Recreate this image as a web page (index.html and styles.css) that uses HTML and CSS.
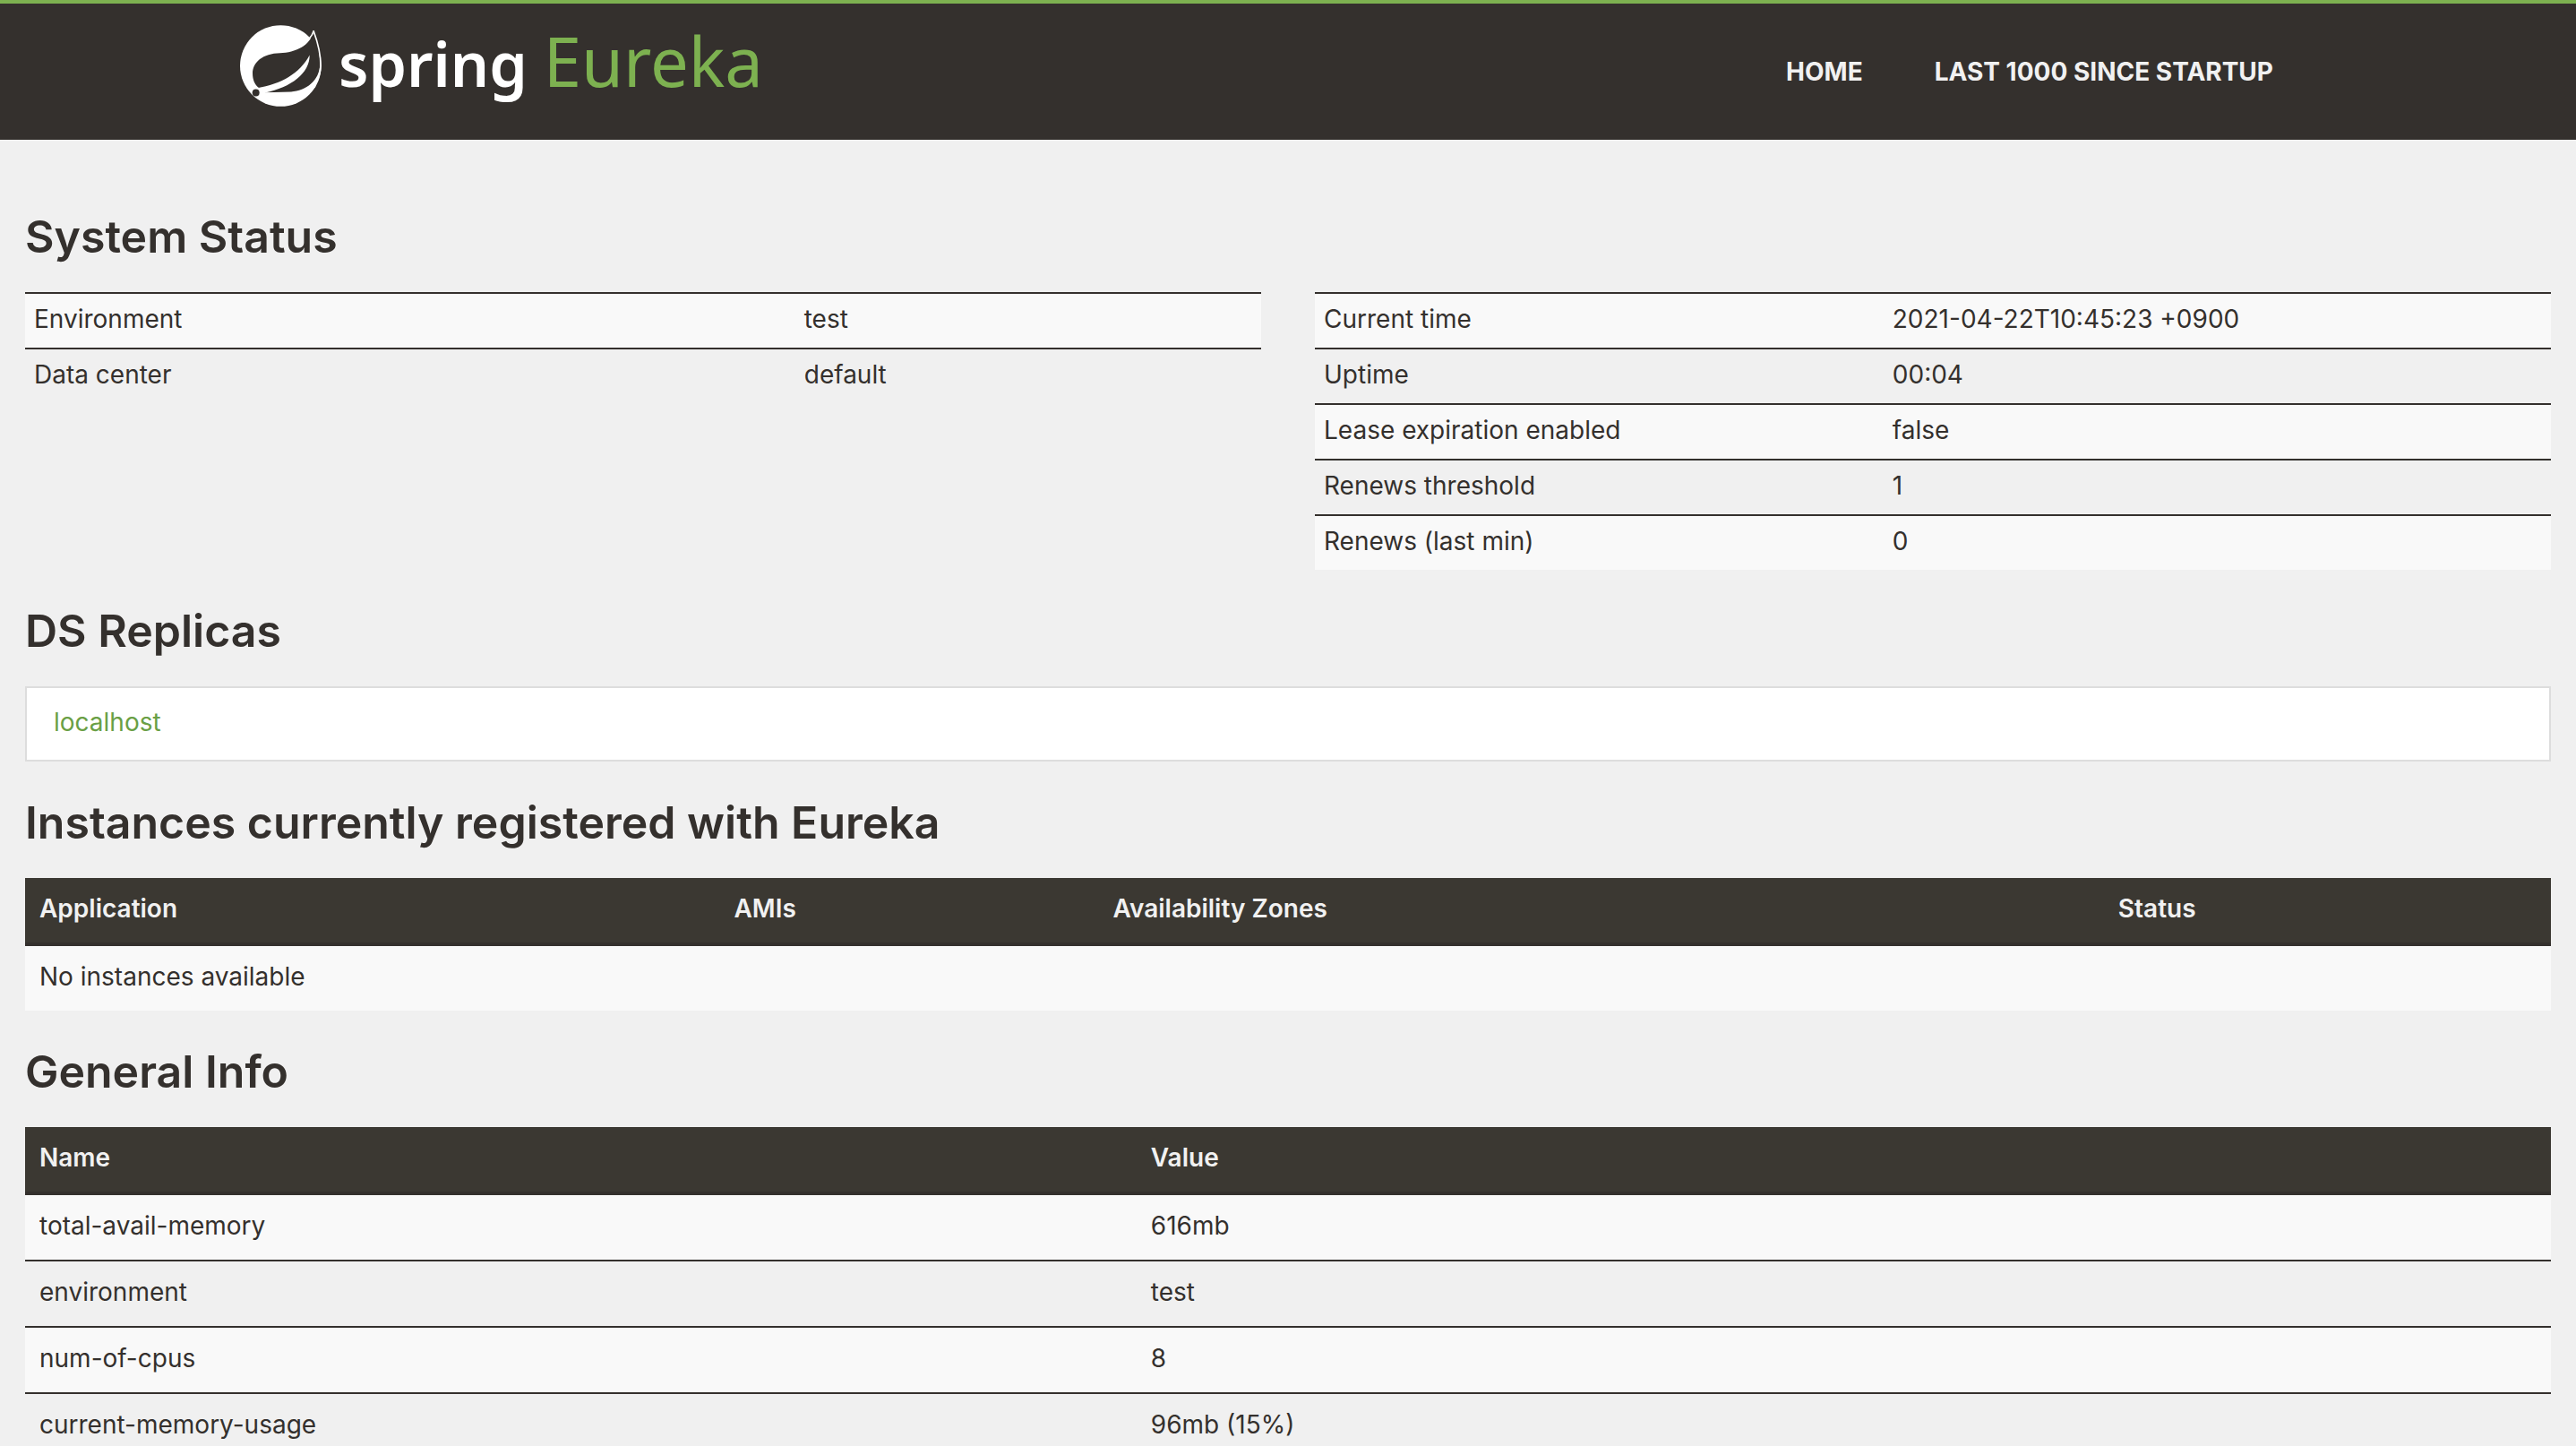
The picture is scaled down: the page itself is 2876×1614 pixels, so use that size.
FILE: index.html
```html
<!DOCTYPE html>
<html lang="en">

<head>
  <meta charset="UTF-8" />
  <meta name="viewport" content="width=device-width, initial-scale=1.0" />
  <title>Eureka</title>
  <link rel="stylesheet" href="styles.css">
</head>

<body>
  <header class="navbar">
    <div class="navbar-inner">
      <a class="brand" href="#">
        <svg class="brand-leaf" viewBox="54 54 276 272" aria-hidden="true">
          <circle cx="190" cy="190" r="136" fill="#fff" />
          <path d="M301 76C288 122 240 146 188 147C130 148 96 178 96 215C96 238 104 253 116 263L140 279L225 277C275 274 320 240 322 185C322 145 311 108 301 76Z" fill="#34302d" />
          <path d="M300 72C312 105 325 145 324 190C323 215 316 235 306 252" fill="none" stroke="#fff" stroke-width="5" />
          <path d="M301 72C298 84 292 92 284 101" fill="none" stroke="#fff" stroke-width="5" />
          <path d="M140 280C190 279 215 281 240 277C275 271 303 250 318 218L306 262L240 306L150 300Z" fill="#fff" />
          <path d="M112 264C190 252 255 215 287 154C288 214 225 262 138 280Z" fill="#fff" />
          <circle cx="107" cy="280" r="12" fill="#34302d" />
        </svg>
        <span class="brand-text">
          <span class="brand-spring">spring</span><span class="brand-eureka">Eureka</span>
        </span>
      </a>
      <nav class="nav">
        <a href="#">Home</a>
        <a href="#">Last 1000 since startup</a>
      </nav>
    </div>
  </header>

  <main class="content">
    <h1>System Status</h1>
    <div class="row">
      <table class="table table-condensed status-left">
        <tbody>
          <tr>
            <td>Environment</td>
            <td>test</td>
          </tr>
          <tr>
            <td>Data center</td>
            <td>default</td>
          </tr>
        </tbody>
      </table>
      <table class="table table-condensed status-right">
        <tbody>
          <tr>
            <td>Current time</td>
            <td>2021-04-22T10:45:23 +0900</td>
          </tr>
          <tr>
            <td>Uptime</td>
            <td>00:04</td>
          </tr>
          <tr>
            <td>Lease expiration enabled</td>
            <td>false</td>
          </tr>
          <tr>
            <td>Renews threshold</td>
            <td>1</td>
          </tr>
          <tr>
            <td>Renews (last min)</td>
            <td>0</td>
          </tr>
        </tbody>
      </table>
    </div>

    <h1>DS Replicas</h1>
    <ul class="list-group">
      <li><a href="#">localhost</a></li>
    </ul>

    <h1>Instances currently registered with Eureka</h1>
    <table class="table instances">
      <thead>
        <tr>
          <th class="col-app">Application</th>
          <th class="col-ami">AMIs</th>
          <th class="col-zone">Availability Zones</th>
          <th>Status</th>
        </tr>
      </thead>
      <tbody>
        <tr>
          <td colspan="4">No instances available</td>
        </tr>
      </tbody>
    </table>

    <h1>General Info</h1>
    <table class="table general">
      <thead>
        <tr>
          <th class="col-name">Name</th>
          <th>Value</th>
        </tr>
      </thead>
      <tbody>
        <tr>
          <td>total-avail-memory</td>
          <td>616mb</td>
        </tr>
        <tr>
          <td>environment</td>
          <td>test</td>
        </tr>
        <tr>
          <td>num-of-cpus</td>
          <td>8</td>
        </tr>
        <tr>
          <td>current-memory-usage</td>
          <td>96mb (15%)</td>
        </tr>
      </tbody>
    </table>
  </main>
</body>

</html>
```
FILE: styles.css
```css
* {
  box-sizing: border-box;
}

body {
  margin: 0;
  background: #f0f0f0;
  color: #34302d;
  font-family: Inter, "Noto Sans", sans-serif;
  font-size: 28px;
  line-height: 40px;
}

a {
  color: #6a9f45;
  text-decoration: none;
}

/* header */
.navbar {
  height: 156px;
  border-top: 4px solid #7db150;
  background: #34302d;
}

.navbar-inner {
  display: flex;
  justify-content: space-between;
  max-width: 2340px;
  margin: 0 auto;
  padding-right: 30px;
}

.brand {
  display: flex;
  align-items: center;
  height: 138px;
  color: #fff;
}

.brand-leaf {
  width: 92px;
  height: 91px;
  margin-right: 18px;
}

.brand-text {
  display: flex;
  align-items: baseline;
  padding-bottom: 8px;
  font-family: "Noto Sans", sans-serif;
  line-height: 90px;
}

.brand-spring {
  margin-right: 18px;
  font-size: 68px;
  font-weight: 600;
}

.brand-eureka {
  font-size: 76px;
  color: #7db150;
}

.nav {
  display: flex;
  padding-top: 56px;
}

.nav a {
  padding: 0 40px;
  color: #f1f1f1;
  font-weight: 700;
  text-transform: uppercase;
}

/* page */
.content {
  padding: 40px 28px 0;
}

h1 {
  margin: 0;
  padding: 38px 0 32px;
  font-size: 50px;
  font-weight: 600;
  line-height: 60px;
}

.row {
  display: grid;
  grid-template-columns: 1fr 1fr;
  align-items: start;
  gap: 60px;
}

.table {
  width: 100%;
  border-collapse: separate;
  border-spacing: 0;
  table-layout: fixed;
}

.table th,
.table td {
  padding: 14px 16px 18px;
  text-align: left;
}

.table th {
  border-bottom: 4px solid #34302d;
  background: #3b3832;
  color: #f1f1f1;
  font-weight: 600;
}

.table td {
  border-top: 2px solid #34302d;
}

.table thead + tbody tr:first-child td {
  border-top: 0;
}

.table tbody tr:nth-child(odd) {
  background: #f9f9f9;
}

.table-condensed td {
  padding: 8px 10px 12px;
}

.status-left td:first-child {
  width: 62.3%;
}

.status-right td:first-child {
  width: 46%;
}

.col-app {
  width: 27.5%;
}

.col-ami {
  width: 15%;
}

.col-zone {
  width: 39.8%;
}

.col-name {
  width: 44%;
}

.list-group {
  margin: 0;
  padding: 18px 30px 22px;
  border: 2px solid #ddd;
  background: #fff;
  list-style: none;
}
```
